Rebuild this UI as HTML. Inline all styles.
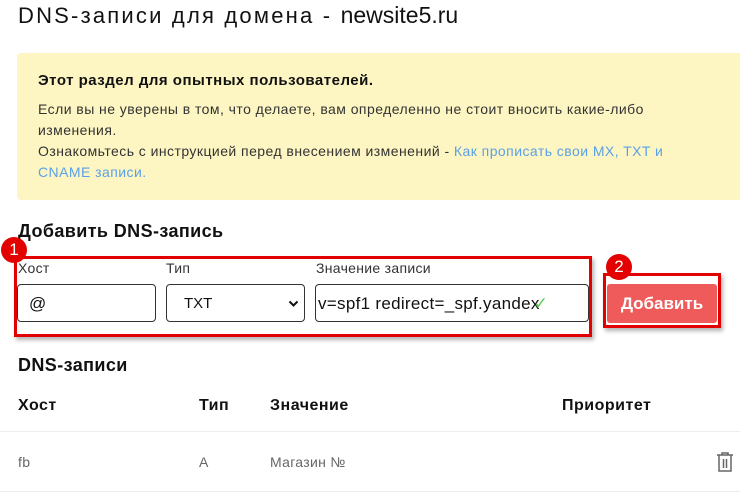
<!DOCTYPE html>
<html><head><meta charset="utf-8"><style>
body{margin:0;width:740px;height:493px;overflow:hidden;background:#fff;font-family:"Liberation Sans",sans-serif;color:#111;position:relative}
.a{position:absolute}
.box{position:absolute;left:17px;top:53px;width:740px;height:147px;background:#fdf6c2;border-radius:4px}
.inp{position:absolute;top:284px;height:38px;border:1px solid #333;border-radius:4px;background:#fff;font-size:17px;line-height:38px;box-sizing:border-box}
.lbl{position:absolute;top:260px;font-size:14px;color:#333;letter-spacing:.3px}
.badge{position:absolute;width:26px;height:26px;border-radius:50%;background:#e30000;color:#fff;font-size:17px;text-align:center;line-height:26px}
.th{position:absolute;top:397px;font-size:16px;font-weight:bold;letter-spacing:.5px}
.td{position:absolute;top:454px;font-size:14px;color:#666;letter-spacing:.3px}
</style></head><body>
<div class="a" style="left:18px;top:2px;font-size:22px;color:#111;white-space:nowrap"><span style="letter-spacing:2.2px">DNS-записи для домена - </span><span style="font-size:23px">newsite5.ru</span></div>
<div class="box"></div>
<div class="a" style="left:38px;top:72px;font-size:15px;font-weight:bold;letter-spacing:.5px">Этот раздел для опытных пользователей.</div>
<div class="a" style="left:38px;top:99px;width:680px;font-size:14px;line-height:21px;color:#333;letter-spacing:.45px">Если вы не уверены в том, что делаете, вам определенно не стоит вносить какие-либо изменения.<br>Ознакомьтесь с инструкцией перед внесением изменений - <span style="color:#5aa0e8">Как прописать свои MX, TXT и CNAME записи.</span></div>
<div class="a" style="left:18px;top:221px;font-size:18px;font-weight:bold;letter-spacing:.4px">Добавить DNS-запись</div>
<div class="a" style="left:14px;top:256px;width:572px;height:75px;border:3px solid #e30000;box-shadow:2px 3px 4px rgba(0,0,0,.3)"></div>
<div class="lbl" style="left:18px">Хост</div>
<div class="lbl" style="left:166px">Тип</div>
<div class="lbl" style="left:316px">Значение записи</div>
<div class="inp" style="left:17px;width:139px;padding-left:11px">@</div>
<div class="inp" style="left:166px;width:139px;padding-left:17px;font-size:15px">TXT<svg style="position:absolute;right:5px;top:15px" width="11" height="8" viewBox="0 0 11 8"><path d="M1.5 1.5l4 4 4-4" fill="none" stroke="#111" stroke-width="2"/></svg></div>
<div class="inp" style="left:315px;width:274px;padding-left:2px;white-space:nowrap;overflow:hidden;letter-spacing:.3px">v=spf1 redirect=_spf.yandex<span style="color:#5c5;margin-left:-6px">✓</span></div>
<div class="a" style="left:603px;top:273px;width:112px;height:49px;border:3px solid #e30000;box-shadow:2px 3px 4px rgba(0,0,0,.3)"></div>
<div class="a" style="left:607px;top:284px;width:110px;height:39px;background:#ef5a5b;border-radius:3px;color:#fff;font-weight:bold;font-size:17px;text-align:center;line-height:39px">Добавить</div>
<div class="badge" style="left:1px;top:237px">1</div>
<div class="badge" style="left:606px;top:254px">2</div>
<div class="a" style="left:18px;top:355px;font-size:18px;font-weight:bold;letter-spacing:.4px">DNS-записи</div>
<div class="th" style="left:18px">Хост</div>
<div class="th" style="left:199px">Тип</div>
<div class="th" style="left:270px">Значение</div>
<div class="th" style="left:562px">Приоритет</div>
<div class="a" style="left:0;top:431px;width:740px;height:1px;background:#eee"></div>
<div class="td" style="left:18px">fb</div>
<div class="td" style="left:199px">A</div>
<div class="td" style="left:270px">Магазин №</div>
<svg class="a" style="left:715px;top:451px" width="20" height="22" viewBox="0 0 20 22"><path d="M2 4h16M7 4V2h6v2M4 4v16h12V4M8.5 8v9M11.5 8v9" fill="none" stroke="#666" stroke-width="1.5"/></svg>
<div class="a" style="left:0;top:491px;width:740px;height:1px;background:#eee"></div>
</body></html>
